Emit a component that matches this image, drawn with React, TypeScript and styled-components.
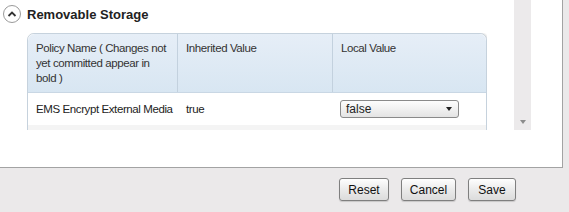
import React, { useState } from 'react';
import styled, { createGlobalStyle } from 'styled-components';

const GlobalStyle = createGlobalStyle`
  html, body {
    margin: 0;
    padding: 0;
    background: #ebe9ea;
    font-family: "Liberation Sans", Arial, sans-serif;
  }
`;

const Page = styled.div`
  width: 569px;
  height: 212px;
  display: flex;
  flex-direction: column;
  overflow: hidden;
`;

const Panel = styled.div`
  width: 563px;
  height: 168px;
  box-sizing: border-box;
  background: #fff;
  border-right: 1px solid #a3a3a3;
  border-bottom: 1px solid #a3a3a3;
  display: flex;
`;

const Main = styled.div`
  width: 514px;
  display: flex;
  flex-direction: column;
`;

const SectionHeader = styled.div`
  display: flex;
  align-items: center;
  gap: 6px;
  height: 28px;
  padding: 0 0 0 3px;
  font-size: 13px;
  font-weight: bold;
  color: #222;
`;

const ToggleCircle = styled.span`
  width: 16px;
  height: 16px;
  border: 1px solid #9a9a9a;
  border-radius: 50%;
  display: flex;
  align-items: center;
  justify-content: center;
  background: #fff;
`;

const TableClip = styled.div`
  margin: 5px 0 0 27px;
  width: 460px;
  height: 97px;
  overflow: hidden;
`;

const Table = styled.div`
  border: 1px solid #c6d2dd;
  border-radius: 7px 7px 0 0;
  box-shadow: 1px 0 2px rgba(0, 0, 0, 0.15);
  background: #fff;
`;

const HeaderRow = styled.div`
  display: grid;
  grid-template-columns: 150px 155px 1fr;
  height: 58px;
  background: linear-gradient(#e6eef7, #d8e6f2);
  border-bottom: 1px solid #c9d7e4;
  border-radius: 7px 7px 0 0;
`;

const HeaderCell = styled.div<{ $last?: boolean }>`
  padding: 7px 8px 0 8px;
  font-size: 11.5px;
  letter-spacing: -0.4px;
  line-height: 15px;
  color: #333;
  border-right: ${p => (p.$last ? 'none' : '1px solid #c3d1de')};
`;

const Row = styled.div<{ $alt?: boolean }>`
  display: grid;
  grid-template-columns: 150px 155px 1fr;
  height: ${p => (p.$alt ? '30px' : '32px')};
  background: ${p => (p.$alt ? '#f4f4f4' : '#fff')};
  align-items: center;
`;

const Cell = styled.div`
  padding: 0 8px;
  font-size: 11.5px;
  letter-spacing: -0.4px;
  color: #222;
  white-space: nowrap;
`;

const SelectBox = styled.div`
  margin-left: -1px;
  width: 119px;
  height: 18px;
  box-sizing: border-box;
  border: 1px solid #8a8a8a;
  border-radius: 3px;
  background: linear-gradient(#fdfdfd, #e4e4e4);
  display: flex;
  align-items: center;
  justify-content: space-between;
  padding: 0 6px 0 5px;
  font-size: 12px;
  letter-spacing: 0;
  color: #222;
`;

const Caret = styled.span`
  width: 0;
  height: 0;
  border-left: 3.5px solid transparent;
  border-right: 3.5px solid transparent;
  border-top: 4px solid #222;
`;

const ScrollTrack = styled.div`
  width: 17px;
  height: 130px;
  background: #eceaeb;
  display: flex;
  flex-direction: column;
  justify-content: flex-end;
  align-items: center;
  padding-bottom: 6px;
  box-sizing: border-box;
`;

const TrackArrow = styled.span`
  width: 0;
  height: 0;
  border-left: 3px solid transparent;
  border-right: 3px solid transparent;
  border-top: 4px solid #8c8c8c;
`;

const Footer = styled.div`
  flex: 1;
  display: flex;
  justify-content: flex-end;
  align-items: flex-start;
  gap: 12px;
  padding: 10px 53px 0 0;
`;

const Button = styled.button<{ $w: number }>`
  width: ${p => p.$w}px;
  height: 23px;
  border: 1px solid #7f7f7f;
  border-radius: 3px;
  background: linear-gradient(#fefefe, #e9e9e9 55%, #dcdcdc);
  box-shadow: 0 1px 1px rgba(0, 0, 0, 0.15);
  font-family: "Liberation Sans", Arial, sans-serif;
  font-size: 12px;
  color: #111;
  padding: 0;
  cursor: pointer;
`;

export default function App() {
  const [value] = useState('false');

  return (
    <Page>
      <GlobalStyle />
      <Panel>
        <Main>
          <SectionHeader>
            <ToggleCircle>
              <svg width="10" height="8" viewBox="0 0 10 8">
                <path d="M1.5 6 L5 2.5 L8.5 6" fill="none" stroke="#333" strokeWidth="1.8" />
              </svg>
            </ToggleCircle>
            Removable Storage
          </SectionHeader>
          <TableClip>
            <Table>
              <HeaderRow>
                <HeaderCell>Policy Name ( Changes not yet committed appear in bold )</HeaderCell>
                <HeaderCell>Inherited Value</HeaderCell>
                <HeaderCell $last>Local Value</HeaderCell>
              </HeaderRow>
              <Row>
                <Cell>EMS Encrypt External Media</Cell>
                <Cell>true</Cell>
                <Cell>
                  <SelectBox>
                    {value}
                    <Caret />
                  </SelectBox>
                </Cell>
              </Row>
              <Row $alt />
            </Table>
          </TableClip>
        </Main>
        <ScrollTrack>
          <TrackArrow />
        </ScrollTrack>
      </Panel>
      <Footer>
        <Button $w={50}>Reset</Button>
        <Button $w={55}>Cancel</Button>
        <Button $w={48}>Save</Button>
      </Footer>
    </Page>
  );
}
